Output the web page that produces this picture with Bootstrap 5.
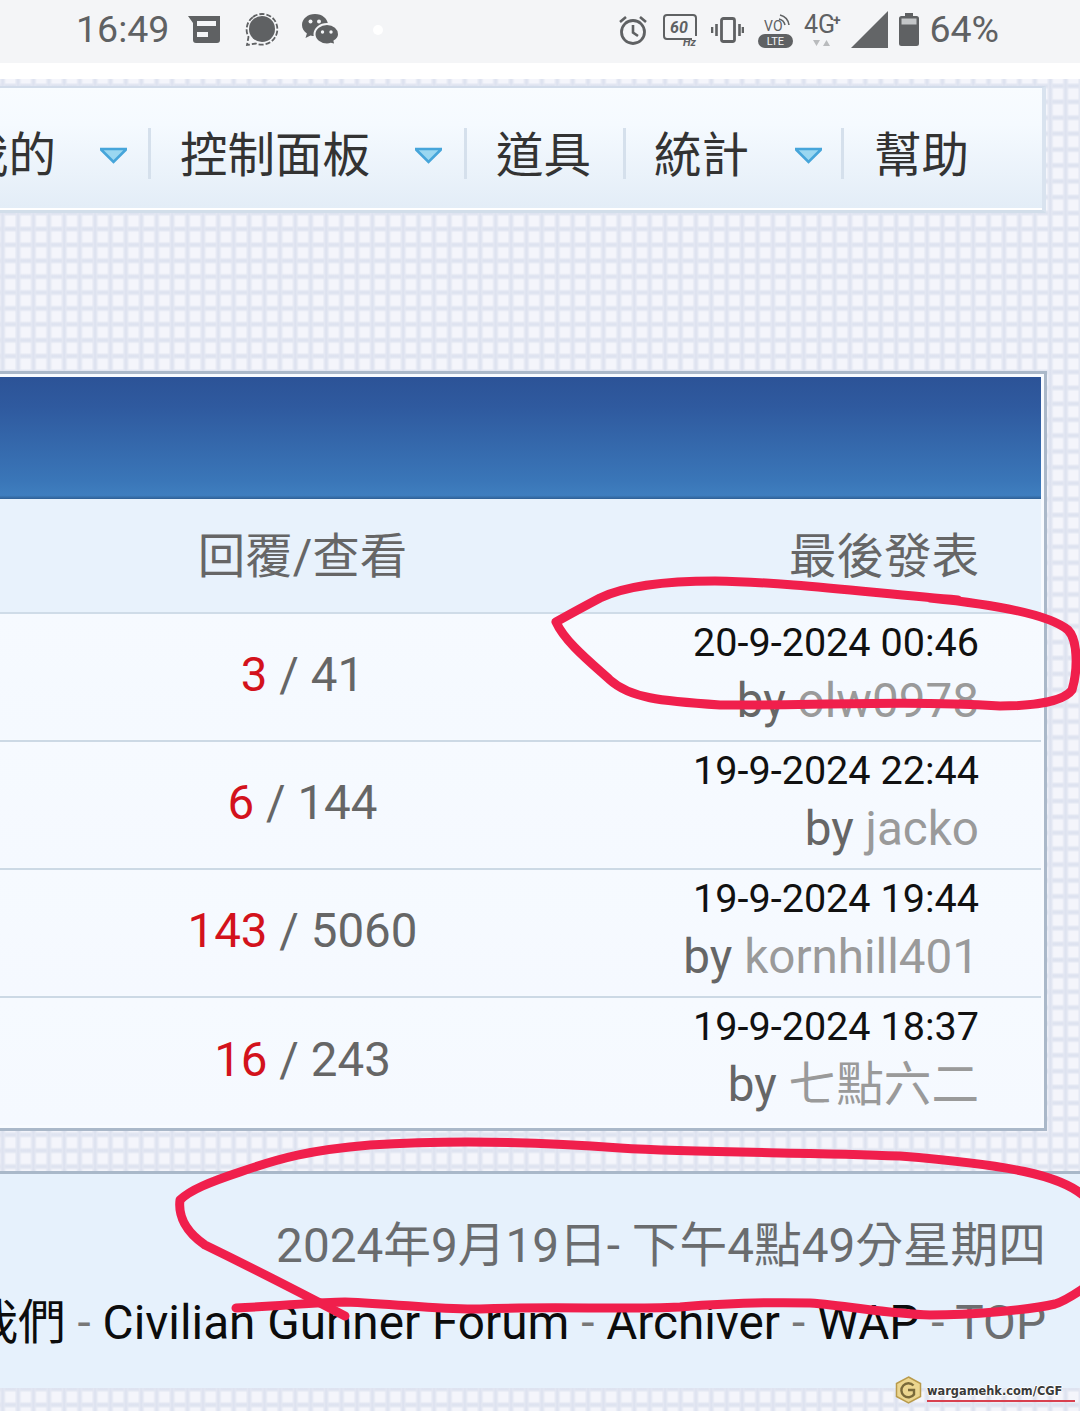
<!DOCTYPE html>
<html lang="zh-Hant">
<head>
<meta charset="utf-8">
<title>Civilian Gunner Forum</title>
<link href="https://cdn.jsdelivr.net/npm/bootstrap@5.3.0/dist/css/bootstrap.min.css" rel="stylesheet">
<style>
html,body{height:1411px;overflow:hidden}
body{position:relative;margin:0;font-family:Roboto,"Noto Sans CJK TC",sans-serif;background-color:#f4f5fb;
background-image:linear-gradient(90deg,transparent 1.5px,#e3e7f2 3.5px,#dce1ef 5px,#e3e7f2 6.5px,transparent 8.5px),linear-gradient(180deg,transparent 1.5px,#e3e7f2 3.5px,#dce1ef 5px,#e3e7f2 6.5px,transparent 8.5px);
background-size:15.42px 15.9px;background-position:-2.4px 0,0 1.5px}
a{color:inherit;text-decoration:none}
.sbar{height:63px;background:#f4f5f7;color:#5f6163;font-size:37.5px;line-height:1;padding:0 81px 4px 76px}
.sbar svg{display:block;flex:none}
.gap186{margin-left:18px}.gap244{margin-left:24px}.gap301{margin-left:23px}.gap372{margin-left:34px}
.gap664{margin-left:16px}.gap712{margin-left:13px}.gap759{margin-left:14px}.gap804{margin-left:11px}.gap851{margin-left:9px}.gap899{margin-left:11px}.gap931{margin-left:10px}
.wstrip{height:16px;background:#fff}
.menubox{margin:7px 34px 0 0;height:127px;padding-top:8px;overflow:hidden;border-top:2px solid #d2dcea;border-bottom:3px solid #d2deea;border-right:4px solid #d9e3ef;
background:linear-gradient(180deg,#f8fcff 0,#f5faff 30%,#e3edf7 98%,#fff 98.5%);color:#333;font-size:47.5px;line-height:1}
.menuitem{flex:none;display:flex;align-items:center;height:51px;padding:8px 32px 0 29px;border-right:3px solid #d5e0ec;white-space:nowrap}
.menuitem.lastitem{border-right:0;padding-right:73px;padding-left:30px}
.menuitem.wide{padding-right:21px}
.menuitem.mine{padding-right:20px}
.menuitem.stat{padding-left:28px;padding-right:18px}
.caret{margin-left:44px;margin-top:-4px;display:block;flex:none}
.stat .caret{margin-left:45px}
.mine .caret{margin-left:43px}
.forumbox{margin:158px 33px 0 0;height:760px;border:3px solid #aab8c9;border-left:0;padding:3px 3px 0 0;background:#f8fbff}
.bluebar{height:122px;background:linear-gradient(180deg,#2c5397 0,#2f5a9f 25%,#3a76b8 85%,#3f7ebf 97%,#2f5f95 100%)}
.threads{table-layout:fixed;width:100%;margin:0;border-collapse:collapse;--bs-table-bg:transparent}
.threads th,.threads td{padding:0;border:0;vertical-align:middle;box-shadow:none}
.threads thead tr{height:114px;background:#e8f2fc;border-bottom:2px solid #cfdce8}
.threads th{font-weight:400;color:#666;font-size:47.5px;line-height:1;padding-top:5px}
.threads tbody tr{height:128px;background:linear-gradient(180deg,#f6faff,#f5f9ff);border-bottom:2px solid #ccd9e5}
.threads tbody tr:last-child{border-bottom:0}
.threads td.countcell{font-size:47.5px;color:#666;line-height:1;padding-bottom:2px}
.redcount{color:#d3121c}
.threads td.lastcell,.threads th.lastcell{padding-right:62px}
.threads td.lastcell{padding-bottom:8px}
.posttime{font-size:39.6px;line-height:54px;color:#111;display:block;padding-top:1px}
.postby{font-size:47.6px;line-height:62px;color:#666;display:block}
.postby a{color:#9a9a9a}
.pagefoot{margin-top:40px;height:217px;border-top:3px solid #a9b8c9;background:#e6f1fc;padding:43px 34px 0 0;white-space:nowrap;overflow:hidden}
.footdate{font-size:47.7px;line-height:58px;color:#6a6c6e}
.footlinks{font-size:47.7px;line-height:62px;color:#777;margin-top:17px}
.footlinks a{color:#0c0c0c}
.footlinks a.toplink{color:#6c6e70}
.inkmark{position:absolute;left:0;top:0;pointer-events:none}
.wmark{position:absolute;left:895px;top:1376px;display:flex;align-items:center}
.wmtext{font-family:"DejaVu Sans",sans-serif;font-weight:700;font-size:11.4px;line-height:1;color:#3a3a3a;margin-left:5px;margin-top:4px;text-shadow:1px 0 #fff,-1px 0 #fff,0 1px #fff,0 -1px #fff}
.wmline{position:absolute;left:32px;top:24px;width:148px;height:2px;background:#d8404f}
</style>
</head>
<body>
<div class="sbar d-flex align-items-center justify-content-between">
  <div class="d-flex align-items-center">
    <span>16:49</span>
    <svg class="gap186" width="34" height="28" viewBox="0 0 34 28"><path d="M1 0H33V24a3 3 0 0 1-3 3H9a3 3 0 0 1-3-3V7Z" fill="#5f6163"/><rect x="10" y="5" width="19" height="5" fill="#f4f5f7"/><rect x="10" y="16" width="11" height="5" fill="#f4f5f7"/></svg>
    <svg class="gap244" width="34" height="34" viewBox="0 0 34 34"><circle cx="17" cy="16" r="13" fill="#5f6163"/><path d="M8 4A15.500 15.500 0 0 1 29 6.500A15.500 15.500 0 0 1 11 30.500L2 32L3.500 24A15.500 15.500 0 0 1 8 4Z" fill="none" stroke="#5f6163" stroke-width="1.800" stroke-dasharray="5 2"/></svg>
    <svg class="gap301" width="37" height="31" viewBox="0 0 37 31"><path d="M13 0C5.800 0 0 4.900 0 11c0 3.500 1.900 6.500 4.900 8.500L3.500 24l5-2.600c1.400.4 3 .6 4.500.6C20.200 22 26 17.100 26 11S20.200 0 13 0Z" fill="#5f6163"/><path d="M25 10c-6.800 0-12.500 4.500-12.500 10.200S18.200 30.400 25 30.400c1.500 0 2.800-.2 4-.6l4.500 1.200-1-3.800c2.800-1.800 4.500-4.700 4.500-7C37 14.500 31.800 10 25 10Z" fill="#5f6163" stroke="#f4f5f7" stroke-width="2"/><circle cx="8.500" cy="7.500" r="2" fill="#f4f5f7"/><circle cx="17" cy="7.500" r="2" fill="#f4f5f7"/><circle cx="20.500" cy="18" r="1.700" fill="#f4f5f7"/><circle cx="29" cy="18" r="1.700" fill="#f4f5f7"/></svg>
    <svg class="gap372" width="10" height="10" viewBox="0 0 10 10"><circle cx="5" cy="5" r="5" fill="#fff"/></svg>
  </div>
  <div class="d-flex align-items-center">
    <svg width="28" height="30" viewBox="0 0 28 30"><circle cx="14" cy="17" r="11.500" fill="none" stroke="#5f6163" stroke-width="2.800"/><path d="M14 10v7.500l5 3.500M1 7l6-5M27 7l-6-5" fill="none" stroke="#5f6163" stroke-width="2.600"/></svg>
    <svg class="gap664" width="35" height="40" viewBox="0 -4 35 40"><path d="M29 25H4a3 3 0 0 1-3-3V4a3 3 0 0 1 3-3h26a3 3 0 0 1 3 3v18" fill="none" stroke="#5f6163" stroke-width="2"/><text x="7" y="19" font-family="Roboto" font-style="italic" font-weight="700" font-size="16" fill="#5f6163">60</text><text x="20" y="32" font-family="Roboto" font-style="italic" font-weight="700" font-size="11" fill="#5f6163">Hz</text></svg>
    <svg class="gap712" width="33" height="26" viewBox="0 0 33 26"><rect x="10.500" y="1.500" width="13" height="23" rx="2" fill="none" stroke="#5f6163" stroke-width="2.800"/><path d="M5.500 7v12M1 10v6M28.500 7v12M32 10v6" stroke="#5f6163" stroke-width="2.600"/></svg>
    <svg class="gap759" width="35" height="44" viewBox="0 -4 35 44"><text x="6" y="19" font-family="Roboto" font-size="14" fill="#5f6163">V</text><text x="15" y="19" font-family="Roboto" font-size="14" fill="#5f6163">O</text><path d="M21 7a8 8 0 0 1 6 6M22 3a12 12 0 0 1 9 10" fill="none" stroke="#5f6163" stroke-width="1.600"/><rect x="0" y="22" width="35" height="14" rx="7" fill="#5f6163"/><text x="17.500" y="33" text-anchor="middle" font-family="Roboto" font-size="11" fill="#f4f5f7">LTE</text></svg>
    <svg class="gap804" width="38" height="44" viewBox="0 -6 38 44"><text x="0" y="19" font-family="Roboto" font-size="25" fill="#5f6163">4G</text><text x="29" y="11" font-family="Roboto" font-weight="700" font-size="14" fill="#5f6163">+</text><path d="M9 26h7l-3.500 6ZM19 32h7l-3.500-6Z" fill="#b9bbbd"/></svg>
    <svg class="gap851" width="37" height="37" viewBox="0 0 37 37"><path d="M37 0V37H0Z" fill="#636567"/></svg>
    <svg class="gap899" width="20" height="33" viewBox="0 0 20 33"><path d="M6 0h8v3h3.500A2.500 2.500 0 0 1 20 5.500V30.500A2.500 2.500 0 0 1 17.500 33H2.500A2.500 2.500 0 0 1 0 30.500V5.500A2.500 2.500 0 0 1 2.500 3H6Z" fill="#5f6163"/><rect x="2.500" y="5.500" width="15" height="6" fill="#c4c6c8"/></svg>
    <span class="gap931">64%</span>
  </div>
</div>
<div class="wstrip"></div>

<nav class="menubox d-flex align-items-center justify-content-end">
  <a class="menuitem wide mine" href="#">我的<svg class="caret" width="29" height="17" viewBox="0 0 29 17"><use href="#caretshape"/></svg></a>
  <a class="menuitem wide" href="#">控制面板<svg class="caret" width="29" height="17" viewBox="0 0 29 17"><use href="#caretshape"/></svg></a>
  <a class="menuitem" href="#">道具</a>
  <a class="menuitem stat" href="#">統計<svg class="caret" width="29" height="17" viewBox="0 0 29 17"><use href="#caretshape"/></svg></a>
  <a class="menuitem lastitem" href="#">幫助</a>
</nav>
<svg width="0" height="0" class="position-absolute"><defs><g id="caretshape"><path d="M1 1H28L14.500 16Z" fill="#9ad7f1"/><path d="M1 2H28M2 2.500L14.500 15L27 2.500" fill="none" stroke="#46a5da" stroke-width="2.600"/></g></defs></svg>

<section class="forumbox">
  <div class="bluebar"></div>
  <table class="table threads">
    <colgroup><col style="width:125px"><col style="width:355px"><col></colgroup>
    <thead>
      <tr><th></th><th class="text-center">回覆/查看</th><th class="text-end lastcell">最後發表</th></tr>
    </thead>
    <tbody>
      <tr><td></td><td class="text-center countcell"><span class="redcount">3</span> / 41</td>
        <td class="text-end lastcell"><span class="posttime">20-9-2024 00:46</span><span class="postby">by <a href="#">olw0978</a></span></td></tr>
      <tr><td></td><td class="text-center countcell"><span class="redcount">6</span> / 144</td>
        <td class="text-end lastcell"><span class="posttime">19-9-2024 22:44</span><span class="postby">by <a href="#">jacko</a></span></td></tr>
      <tr><td></td><td class="text-center countcell"><span class="redcount">143</span> / 5060</td>
        <td class="text-end lastcell"><span class="posttime">19-9-2024 19:44</span><span class="postby">by <a href="#">kornhill401</a></span></td></tr>
      <tr><td></td><td class="text-center countcell"><span class="redcount">16</span> / 243</td>
        <td class="text-end lastcell"><span class="posttime">19-9-2024 18:37</span><span class="postby">by <a href="#">七點六二</a></span></td></tr>
    </tbody>
  </table>
</section>

<footer class="pagefoot text-end">
  <div class="footdate">2024年9月19日- 下午4點49分星期四</div>
  <div class="footlinks d-flex justify-content-end"><span><a href="#">聯繫我們</a> - <a href="#">Civilian Gunner Forum</a> - <a href="#">Archiver</a> - <a href="#">WAP</a> - <a class="toplink" href="#">TOP</a></span></div>
</footer>

<svg class="inkmark" width="1080" height="1411" viewBox="0 0 1080 1411" fill="none" stroke="#f01f4c" stroke-width="9" stroke-linecap="round" stroke-linejoin="round">
  <path d="M958 600C880 594 790 582 715 581C665 581 625 586 600 598C585 606 570 614 556 622C565 642 590 662 610 680C630 698 660 701 720 705C800 706 900 700 1000 706C1040 706 1065 700 1072 690C1078 670 1078 640 1068 630C1050 615 1000 605 930 598"/>
  <path d="M1084 1196C1060 1175 1010 1165 900 1156C800 1152 700 1153 620 1148C540 1142 450 1140 370 1145C310 1150 280 1158 240 1172C210 1182 190 1190 180 1200C178 1216 186 1232 205 1245C240 1262 280 1282 345 1316"/>
  <path d="M236 1308C280 1306 320 1302 345 1302C400 1304 440 1310 480 1309C560 1306 620 1310 680 1307C730 1303 770 1302 810 1303C850 1306 890 1314 930 1315C970 1315 1030 1310 1055 1304C1065 1301 1075 1294 1084 1288"/>
</svg>

<div class="wmark">
  <svg width="27" height="28" viewBox="0 0 27 28"><path d="M13.500 1L25.500 7.500V20.500L13.500 27L1.500 20.500V7.500Z" fill="#ecd68f" stroke="#b99b4c" stroke-width="1.500"/><path d="M18.500 9.500A7 7 0 1 0 19 18.500V14H13" fill="none" stroke="#7a6a3a" stroke-width="2.400"/></svg>
  <span class="wmtext">wargamehk.com/CGF</span>
  <span class="wmline"></span>
</div>
</body>
</html>
